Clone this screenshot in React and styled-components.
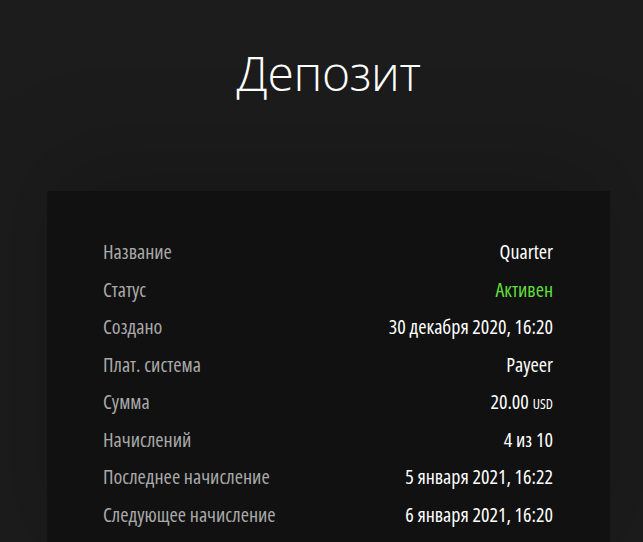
import styled, { createGlobalStyle } from 'styled-components';

const GlobalStyle = createGlobalStyle`
  html, body {
    margin: 0;
    padding: 0;
    background: #1c1c1c;
  }
  body {
    font-family: "Open Sans", "Liberation Sans", sans-serif;
    font-stretch: 75%;
  }
`;

const Page = styled.div`
  height: 542px;
  background: #1c1c1c;
  padding: 0 33px 0 47px;
  overflow: hidden;
`;

const Title = styled.h1`
  margin: 0;
  padding: 40px 0 0;
  height: 191px;
  box-sizing: border-box;
  text-align: center;
  font-family: "Open Sans", sans-serif;
  font-stretch: 100%;
  font-weight: 300;
  font-size: 48px;
  line-height: 66px;
  color: #ffffff;
  letter-spacing: -0.4px;
`;

const Card = styled.section`
  background: #111111;
  padding: 42px 57px 40px 56px;
  box-shadow: 0 -30px 90px rgba(0, 0, 0, 0.18);
`;

const Row = styled.div`
  display: flex;
  justify-content: space-between;
  align-items: center;
  height: 37.5px;
  font-size: 20px;
`;

const Label = styled.span`
  color: #a9a9a9;
`;

const Value = styled.span`
  font-weight: 500;
  color: ${({ $accent }) => ($accent ? '#62dc3e' : '#ffffff')};
`;

const Unit = styled.small`
  font-size: 14px;
  margin-left: 4px;
`;

const rows = [
  { label: 'Название', value: 'Quarter' },
  { label: 'Статус', value: 'Активен', accent: true },
  { label: 'Создано', value: '30 декабря 2020, 16:20' },
  { label: 'Плат. система', value: 'Payeer' },
  { label: 'Сумма', value: '20.00', unit: 'USD' },
  { label: 'Начислений', value: '4 из 10' },
  { label: 'Последнее начисление', value: '5 января 2021, 16:22' },
  { label: 'Следующее начисление', value: '6 января 2021, 16:20' },
];

const App = () => (
  <>
    <GlobalStyle />
    <Page>
      <Title>Депозит</Title>
      <Card>
        {rows.map((row) => (
          <Row key={row.label}>
            <Label>{row.label}</Label>
            <Value $accent={row.accent}>
              {row.value}
              {row.unit && <Unit>{row.unit}</Unit>}
            </Value>
          </Row>
        ))}
      </Card>
    </Page>
  </>
);

export default App;
